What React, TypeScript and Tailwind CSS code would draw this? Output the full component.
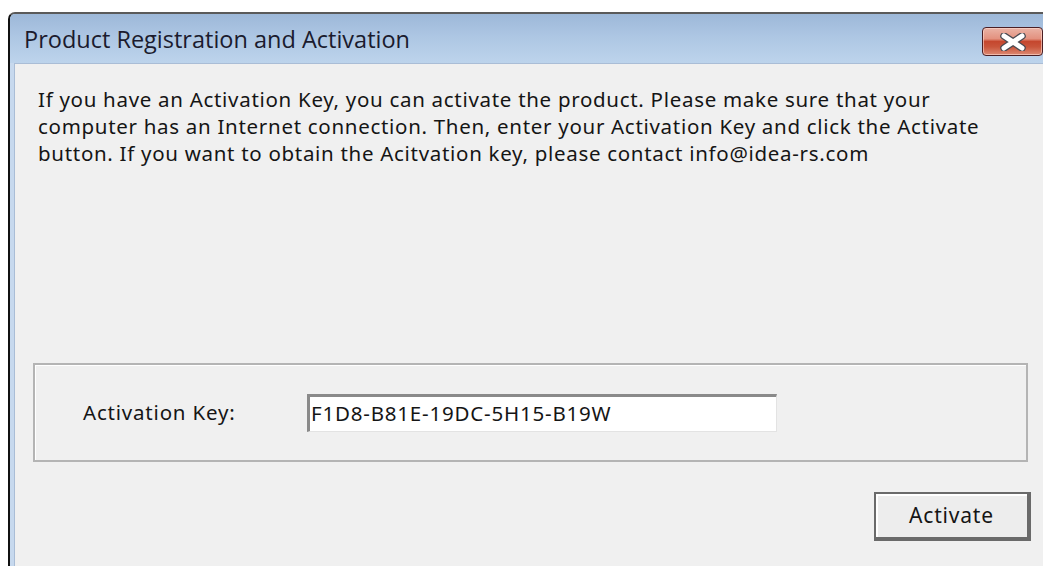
import React from "react";

const body = '"Noto Sans", "DejaVu Sans", sans-serif';

function CloseButton() {
  return (
    <div className="self-start mt-[13px] relative h-[29px] w-[61px] rounded-[4px] border border-[#4b1f24] bg-[linear-gradient(to_bottom,#eab3a6_0%,#e3917f_40%,#c5472e_50%,#c9553b_70%,#dd8a73_100%)] shadow-[inset_0_0_0_1px_rgba(255,220,210,0.6)] flex items-center justify-center">
      <svg width="28" height="18" viewBox="0 0 28 18">
        <path d="M5 3 L23 15 M23 3 L5 15" stroke="#4a4a52" strokeWidth="7.5" strokeLinecap="round" />
        <path d="M5 3 L23 15 M23 3 L5 15" stroke="#ffffff" strokeWidth="5" strokeLinecap="round" />
      </svg>
    </div>
  );
}

export default function App() {
  return (
    <div className="w-[1043px] h-[566px] bg-white overflow-hidden pl-[8px] pt-[12px]" style={{ fontFamily: body }}>
      <div className="w-[1050px] h-[560px] flex flex-col rounded-tl-[7px] border-l-[2px] border-t-[2px] border-l-[#111] border-t-[#5a5a5a] bg-[#c7d9ee] overflow-hidden">
        {/* title bar */}
        <div className="h-[49px] flex items-center justify-between pl-[14px] pr-[15px] bg-[linear-gradient(to_bottom,#9db8d8_0%,#adc6e3_45%,#bdd4ec_100%)]">
          <span className="text-[23.5px] text-[#1b1b2e] mt-[2px]" style={{ fontFamily: '"Open Sans", "Noto Sans", sans-serif' }}>
            Product Registration and Activation
          </span>
          <CloseButton />
        </div>
        {/* client area */}
        <div className="flex-1 ml-[4px] border-l border-t border-[#aabdd6] bg-[#f0f0f0] pl-[23px] pr-[14px] pt-[22px] flex flex-col">
          <p className="text-[20.5px] leading-[27px] text-[#151515] tracking-[0.7px]">
            <span className="block">If you have an Activation Key, you can activate the product. Please make sure that your</span>
            <span className="block">computer has an Internet connection. Then, enter your Activation Key and click the Activate</span>
            <span className="block">button. If you want to obtain the Acitvation key, please contact info@idea-rs.com</span>
          </p>
          <div className="mt-[196px] ml-[-5px] w-[995px] h-[99px] border-2 border-[#b4b4b4] shadow-[inset_1px_1px_0_#fff] flex items-center pl-[48px]">
            <span className="w-[224px] text-[20.5px] text-[#151515] tracking-[0.8px]">Activation Key:</span>
            <div className="w-[470px] h-[38px] bg-white border-t-[3px] border-l-[3px] border-b border-r border-t-[#8a8a8a] border-l-[#8a8a8a] border-b-[#e3e3e3] border-r-[#e3e3e3] flex items-center pl-[1px]">
              <span className="text-[20.5px] text-[#151515] tracking-[0.8px]">F1D8-B81E-19DC-5H15-B19W</span>
            </div>
          </div>
          <div className="mt-[30px] ml-[836px] w-[157px] h-[49px] border-[2px] border-[#6a6a6a] border-r-[4px] border-b-[4px] bg-[#ededed] shadow-[inset_2px_2px_0_#fff] flex items-center justify-center">
            <span className="text-[21px] text-[#151515] tracking-[0.8px]">Activate</span>
          </div>
        </div>
      </div>
    </div>
  );
}
